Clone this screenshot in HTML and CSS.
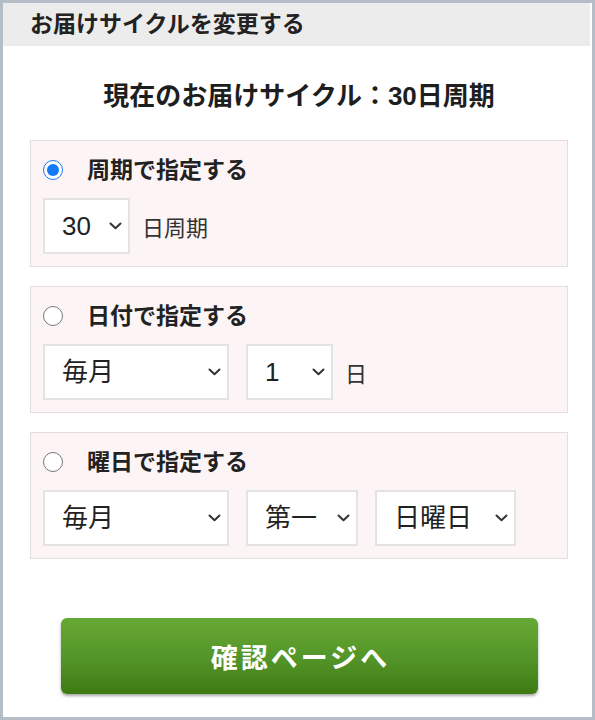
FILE: index.html
```html
<!DOCTYPE html>
<html lang="ja">
<head>
<meta charset="utf-8">
<title>お届けサイクルを変更する</title>
<link rel="stylesheet" href="styles.css">
</head>
<body>
<div class="frame">
  <div class="header">お届けサイクルを変更する</div>
  <main class="content">
    <p class="current">現在のお届けサイクル：30日周期</p>
    <div class="options">
      <section class="opt">
        <label class="opt-head"><input type="radio" name="cycle" checked><span>周期で指定する</span></label>
        <div class="opt-row">
          <div class="sel w-num">
            <select><option>30</option></select>
            <svg class="chev" viewBox="0 0 13 8"><path d="M1.5 1.5 L6.5 6.2 L11.5 1.5" fill="none" stroke="#333" stroke-width="2" stroke-linecap="round" stroke-linejoin="round"/></svg>
          </div>
          <span class="suffix">日周期</span>
        </div>
      </section>
      <section class="opt">
        <label class="opt-head"><input type="radio" name="cycle"><span>日付で指定する</span></label>
        <div class="opt-row">
          <div class="sel w-month">
            <select><option>毎月</option></select>
            <svg class="chev" viewBox="0 0 13 8"><path d="M1.5 1.5 L6.5 6.2 L11.5 1.5" fill="none" stroke="#333" stroke-width="2" stroke-linecap="round" stroke-linejoin="round"/></svg>
          </div>
          <div class="sel w-num">
            <select><option>1</option></select>
            <svg class="chev" viewBox="0 0 13 8"><path d="M1.5 1.5 L6.5 6.2 L11.5 1.5" fill="none" stroke="#333" stroke-width="2" stroke-linecap="round" stroke-linejoin="round"/></svg>
          </div>
          <span class="suffix">日</span>
        </div>
      </section>
      <section class="opt">
        <label class="opt-head"><input type="radio" name="cycle"><span>曜日で指定する</span></label>
        <div class="opt-row">
          <div class="sel w-month">
            <select><option>毎月</option></select>
            <svg class="chev" viewBox="0 0 13 8"><path d="M1.5 1.5 L6.5 6.2 L11.5 1.5" fill="none" stroke="#333" stroke-width="2" stroke-linecap="round" stroke-linejoin="round"/></svg>
          </div>
          <div class="sel w-nth">
            <select><option>第一</option></select>
            <svg class="chev" viewBox="0 0 13 8"><path d="M1.5 1.5 L6.5 6.2 L11.5 1.5" fill="none" stroke="#333" stroke-width="2" stroke-linecap="round" stroke-linejoin="round"/></svg>
          </div>
          <div class="sel w-dow">
            <select><option>日曜日</option></select>
            <svg class="chev" viewBox="0 0 13 8"><path d="M1.5 1.5 L6.5 6.2 L11.5 1.5" fill="none" stroke="#333" stroke-width="2" stroke-linecap="round" stroke-linejoin="round"/></svg>
          </div>
        </div>
      </section>
    </div>
    <div class="actions">
      <button type="button" class="btn">確認ページへ</button>
    </div>
  </main>
</div>
</body>
</html>
```
FILE: styles.css
```css
* { box-sizing: border-box; }
html, body { margin: 0; padding: 0; }
body {
  font-family: "Liberation Sans", "Noto Sans CJK JP", sans-serif;
  color: #222;
  background: #fff;
}
.frame {
  width: 595px;
  height: 720px;
  border: 3px solid #b5bdc6;
  display: flex;
  flex-direction: column;
  background: #fff;
}
.header {
  height: 43px;
  background: #ececec;
  font-size: 23px;
  font-weight: 700;
  line-height: 43px;
  padding-left: 27px;
  margin-right: 2px;
  color: #222;
}
.content {
  flex: 1;
  display: flex;
  flex-direction: column;
  padding: 0 24px 0 27px;
}
.current {
  margin: 32px 0 26px;
  text-align: center;
  font-size: 26px;
  font-weight: 700;
  line-height: 36px;
  color: #1e1e1e;
}
.options {
  display: flex;
  flex-direction: column;
  gap: 19px;
}
.opt {
  background: #fdf5f5;
  border: 1px solid #e3dddd;
  padding: 12px;
}
.opt-head {
  display: flex;
  align-items: center;
  height: 34px;
  gap: 24px;
  font-size: 23px;
  font-weight: 700;
  line-height: 34px;
  color: #222;
}
.opt-head input {
  width: 20px;
  height: 20px;
  margin: 0;
  accent-color: #1479f6;
}
.opt-row {
  display: flex;
  align-items: center;
  gap: 17px;
  margin-top: 11px;
}
.sel {
  position: relative;
  height: 56px;
  flex: none;
}
.sel select {
  -webkit-appearance: none;
  appearance: none;
  width: 100%;
  height: 100%;
  border: 2px solid #e3e3e3;
  border-radius: 0;
  background: #fff;
  font-family: inherit;
  font-size: 26px;
  color: #222;
  padding: 0 0 0 17px;
  margin: 0;
}
.chev {
  position: absolute;
  right: 8px;
  top: 50%;
  width: 13px;
  height: 8px;
  margin-top: -4px;
  pointer-events: none;
}
.w-num { width: 87px; }
.w-month { width: 186px; }
.w-nth { width: 112px; }
.w-dow { width: 141px; }
.suffix {
  font-size: 22px;
  color: #333;
  margin-left: -5px;
}
.actions {
  margin-top: 59px;
  display: flex;
  justify-content: center;
}
.btn {
  width: 477px;
  height: 76px;
  border: none;
  border-radius: 6px;
  background: linear-gradient(to bottom, #67a934 0%, #55962a 50%, #3d7b12 100%);
  box-shadow: 0 2px 3px rgba(0, 0, 0, 0.35);
  color: #fff;
  font-family: inherit;
  font-size: 27px;
  font-weight: 700;
  letter-spacing: 3px;
  padding: 0 0 0 3px;
  cursor: pointer;
}
```
